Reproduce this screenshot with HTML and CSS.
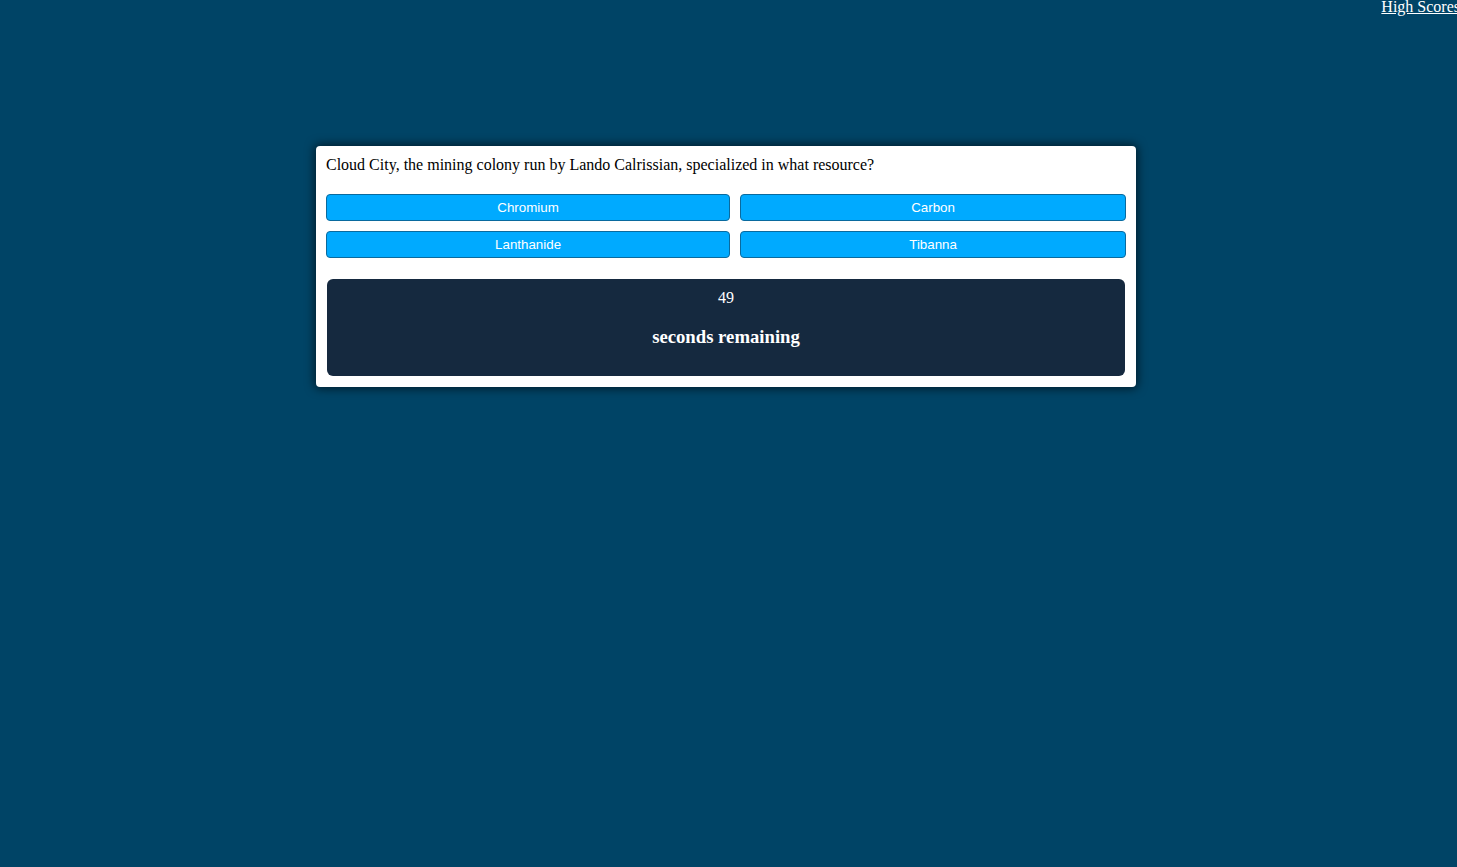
FILE: index.html
```html
<!DOCTYPE html>
<html>
<head>
<meta charset="utf-8">
<link rel="stylesheet" href="styles.css">
</head>
<body>
<header class="topbar">
  <a class="scores-link" href="#">High Scores</a>
</header>
<main class="stage">
  <section class="card">
    <p class="question">Cloud City, the mining colony run by Lando Calrissian, specialized in what resource?</p>
    <div class="answers">
      <button class="answer">Chromium</button>
      <button class="answer">Carbon</button>
      <button class="answer">Lanthanide</button>
      <button class="answer">Tibanna</button>
    </div>
    <div class="timer">
      <p class="timer-count">49</p>
      <h3 class="timer-label">seconds remaining</h3>
    </div>
  </section>
</main>
</body>
</html>
```

FILE: styles.css
```css
html, body {
  margin: 0;
  padding: 0;
}
body {
  background: #004466;
  font-family: "Liberation Serif", "Times New Roman", serif;
  font-size: 16px;
  color: #000;
  min-height: 867px;
  overflow: hidden;
}
.topbar {
  display: flex;
  justify-content: flex-end;
  height: 16px;
  margin-right: -3px;
}
.scores-link {
  color: #fff;
  line-height: 16px;
  margin-top: -1px;
}
.stage {
  display: flex;
  justify-content: center;
  padding-top: 130px;
  padding-right: 5px;
}
.card {
  width: 800px;
  background: #fff;
  border-radius: 4px;
  padding: 10px;
  box-shadow: 0 0 10px 2px rgba(0, 0, 0, 0.55);
}
.question {
  margin: 0 0 20px;
  line-height: 18px;
}
.answers {
  display: grid;
  grid-template-columns: auto auto;
  gap: 10px;
}
.answer {
  font-family: "Liberation Sans", Arial, sans-serif;
  font-size: 13.333px;
  color: #fff;
  background: #00aaff;
  border: 1px solid #0a6a9e;
  border-radius: 4px;
  height: 27px;
  padding: 0 6px;
  cursor: pointer;
}
.timer {
  margin: 21px 1px 1px;
  background: #15293f;
  border-radius: 6px;
  color: #fff;
  text-align: center;
  height: 97px;
  padding-top: 10px;
  box-sizing: border-box;
}
.timer-count {
  margin: 0;
  line-height: 18px;
}
.timer-label {
  margin: 19px 0 0;
  font-size: 18.72px;
  line-height: 22px;
}
```
